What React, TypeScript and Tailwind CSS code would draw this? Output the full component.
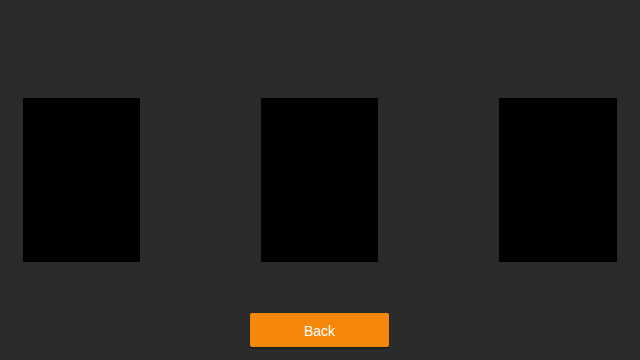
export default function App() {
  return (
    <div className="w-[640px] h-[360px] bg-[#2b2b2b] flex flex-col overflow-hidden" style={{ fontFamily: '"Liberation Sans", Arial, sans-serif' }}>
      <div className="flex gap-[121px] px-[23px] pt-[98px]">
        <div className="w-[117px] h-[164px] bg-black" />
        <div className="w-[117px] h-[164px] bg-black" />
        <div className="w-[118px] h-[164px] bg-black" />
      </div>
      <div className="flex justify-center pt-[51px] pr-[1px]">
        <button className="w-[139px] h-[34px] pt-[2px] bg-[#f5870a] text-white text-[14px] rounded-[2px] shadow-[0_1px_2px_rgba(0,0,0,0.5)]">
          Back
        </button>
      </div>
    </div>
  );
}
